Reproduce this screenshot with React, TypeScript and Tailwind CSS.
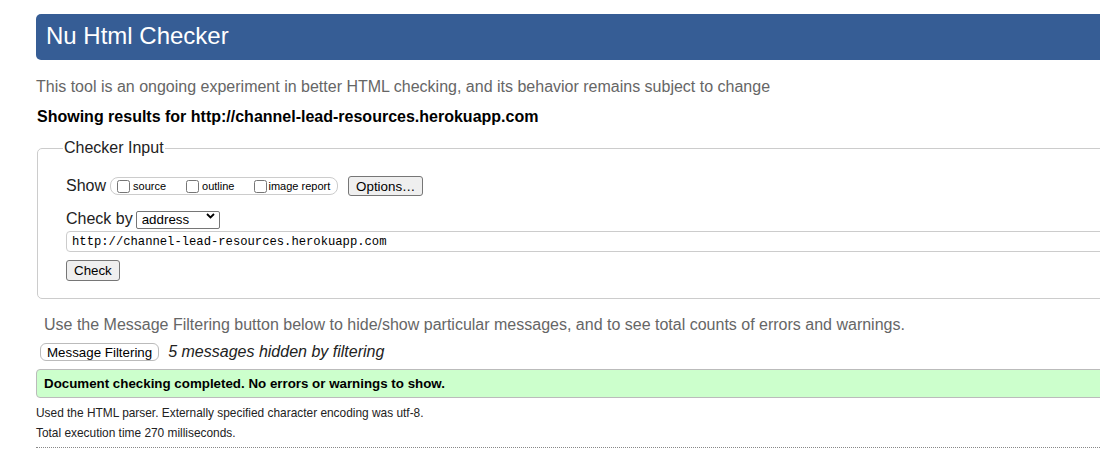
import { ChangeEvent } from 'react'

/**
 * NuChecker
 * Result page of the Nu Html Checker (cropped to the viewport)
 */
const ShowOption = ({ label, last }: { label: string; last?: boolean }) => (
  <label className="flex items-center">
    <input type="checkbox" className="m-0 w-[13px] h-[13px]" />
    <span className={`text-[11px] leading-[13px] text-black ${last ? 'ml-[1px]' : 'ml-[3px] mr-[20px]'}`}>
      {label}
    </span>
  </label>
)

export default function App() {
  const noop = (e: ChangeEvent<HTMLSelectElement>) => e

  return (
    <div className="w-[1100px] h-[456px] overflow-hidden bg-white font-['Liberation_Sans',Arial,sans-serif]">
      <div className="ml-[36px] w-[1200px]">
        {/* Header */}
        <div className="mt-[14px] h-[46px] bg-[#365d95] rounded-l-[5px] pl-[10px] pt-[8px]">
          <h1 className="text-[24px] leading-[27px] text-white">Nu Html Checker</h1>
        </div>

        <p className="mt-[18px] text-[16px] leading-[18px] text-[#666]">
          This tool is an ongoing experiment in better HTML checking, and its behavior remains subject to change
        </p>

        <p className="mt-[12px] ml-[1px] text-[16px] leading-[18px] font-bold text-black">
          Showing results for http://channel-lead-resources.herokuapp.com
        </p>

        {/* Checker Input */}
        <fieldset className="mt-[13px] ml-[1px] border border-[#ccc] rounded-[5px] pl-[28px] pt-[19px] pb-[16px]">
          <legend className="ml-[-3px] px-[1px] text-[16px] leading-[18px] text-[#222]">Checker Input</legend>

          <div className="flex items-center h-[20px]">
            <span className="text-[16px] leading-[18px] text-[#222]">Show</span>
            <div className="ml-[4px] h-[18px] flex items-center border border-[#ccc] rounded-[8px] pl-[6px] pr-[7px]">
              <ShowOption label="source" />
              <ShowOption label="outline" />
              <ShowOption label="image report" last />
            </div>
            <button className="ml-[10px] h-[20px] w-[75px] bg-[#efefef] border border-[#767676] rounded-[3px] text-[13.33px] text-black">
              Options…
            </button>
          </div>

          <div className="mt-[13px] flex items-center h-[19px]">
            <span className="text-[16px] leading-[18px] text-[#222]">Check by</span>
            <div className="relative ml-[3px]">
              <select
                defaultValue="address"
                onChange={noop}
                className="appearance-none w-[84px] h-[18px] border border-[#767676] rounded-[2px] bg-white pl-[5px] text-[13.33px] leading-[16px] text-black"
              >
                <option value="address">address</option>
                <option value="file">file upload</option>
                <option value="text">text input</option>
              </select>
              <svg
                className="absolute right-[5px] top-[6px] pointer-events-none"
                width="9"
                height="6"
                viewBox="0 0 9 6"
              >
                <path d="M1 1l3.5 3.5L8 1" fill="none" stroke="#000" strokeWidth="1.8" />
              </svg>
            </div>
          </div>

          <div className="mt-[3px] h-[21px] border border-[#ccc] rounded-[4px] flex items-center pl-[5px]">
            <span className="font-['Liberation_Mono','Courier_New',monospace] text-[12.2px] leading-[14px] text-black">
              http://channel-lead-resources.herokuapp.com
            </span>
          </div>

          <button className="mt-[8px] h-[21px] px-[7px] bg-[#efefef] border border-[#767676] rounded-[3px] text-[13.33px] leading-[15px] text-black">
            Check
          </button>
        </fieldset>

        <p className="mt-[17px] ml-[8px] text-[16px] leading-[18px] text-[#666]">
          Use the Message Filtering button below to hide/show particular messages, and to see total counts of errors and warnings.
        </p>

        <div className="mt-[8px] h-[20px] flex items-center">
          <button className="ml-[4px] h-[18px] px-[6px] bg-white border border-[#bbb] rounded-[6px] text-[13.33px] leading-[15px] text-black">
            Message Filtering
          </button>
          <span className="ml-[9px] text-[16px] leading-[18px] italic text-[#222]">5 messages hidden by filtering</span>
        </div>

        {/* Success message */}
        <div className="mt-[7px] h-[29px] bg-[#ccffcc] border border-[#bbb] rounded-l-[4px] flex items-center pl-[7px]">
          <span className="text-[13.33px] leading-[15px] font-bold text-black">
            Document checking completed. No errors or warnings to show.
          </span>
        </div>

        <p className="mt-[8px] text-[11.9px] leading-[14px] text-[#222]">
          Used the HTML parser. Externally specified character encoding was utf-8.
        </p>
        <p className="mt-[6px] text-[11.9px] leading-[14px] text-[#222]">Total execution time 270 milliseconds.</p>

        <div className="mt-[7px] border-t border-dotted border-[#888]" />
      </div>
    </div>
  )
}
